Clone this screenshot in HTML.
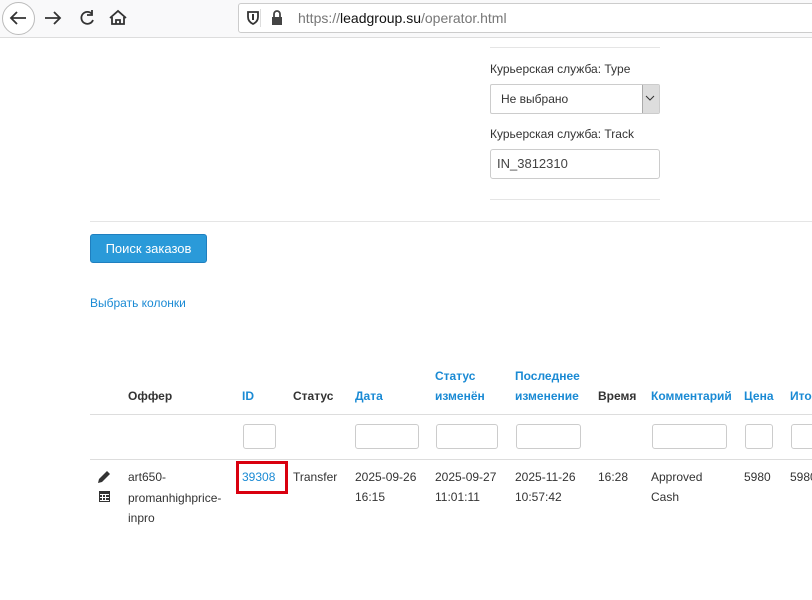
<!DOCTYPE html>
<html><head><meta charset="utf-8"><style>
*{box-sizing:border-box;margin:0;padding:0}
body{width:812px;height:600px;overflow:hidden;background:#fff;font-family:"Liberation Sans",sans-serif;font-size:12px;color:#333;position:relative}
.a{position:absolute;white-space:nowrap}
.b{color:#1a8ad4}
.h{font-weight:bold}
.in{position:absolute;border:1px solid #ccc;border-radius:3px;background:#fff;height:25px}
.hr{position:absolute;height:1px;background:#e5e5e5}
</style></head><body>
<div class="a" style="left:0;top:0;width:812px;height:38px;background:#f9f9fa;border-bottom:1px solid #ddd"></div>
<div class="a" style="left:2px;top:2px;width:33px;height:33px;border:1px solid #bbb;border-radius:50%;background:#fff"></div>
<svg class="a" style="left:0;top:0" width="140" height="38" fill="none" stroke="#333" stroke-width="1.8">
<path d="M26 18H11M17 12l-6 6 6 6"/><path d="M45 18h15M54 12l6 6-6 6"/>
<path d="M92 14a6 6 0 1 0 1 6"/><path d="M92 10v5h-5" /><path d="M110 18l8-7 8 7M112 17v7h12v-7M116 24v-4h4v4"/>
</svg>
<div class="a" style="left:238px;top:3px;width:580px;height:30px;background:#fff;border:1px solid #ccc;border-radius:3px"></div>
<svg class="a" style="left:245px;top:9px" width="50" height="18"><path d="M3 3h10v5c0 4-3 6-5 7-2-1-5-3-5-7z" fill="none" stroke="#333" stroke-width="1.8"/><rect x="7" y="5" width="2" height="6" fill="#333"/><rect x="15" y="0" width="1" height="18" fill="#ddd"/><rect x="27" y="8" width="10" height="8" fill="#444"/><path d="M29 8V5a3 3 0 0 1 6 0v3" fill="none" stroke="#444" stroke-width="1.8"/></svg>
<div class="a" style="left:298px;top:10px;font-size:14px;color:#777">https://<span style="color:#111">leadgroup.su</span>/operator.html</div>

<div class="hr" style="left:490px;top:47px;width:170px"></div>
<div class="a" style="left:490px;top:62px">Курьерская служба: Type</div>
<div class="in" style="left:490px;top:84px;width:170px;height:30px;border-radius:2px"></div>
<div class="a" style="left:501px;top:92px">Не выбрано</div>
<div class="a" style="left:642px;top:85px;width:17px;height:28px;background:#ddd;border-left:1px solid #aaa"></div>
<svg class="a" style="left:645px;top:94px" width="10" height="8"><path d="M1 2l4 4 4-4" fill="none" stroke="#333"/></svg>
<div class="a" style="left:490px;top:127px">Курьерская служба: Track</div>
<div class="in" style="left:490px;top:149px;width:170px;height:30px"></div>
<div class="a" style="left:497px;top:156px;font-size:13px;color:#444">IN_3812310</div>
<div class="hr" style="left:490px;top:199px;width:170px"></div>
<div class="hr" style="left:90px;top:221px;width:722px"></div>
<div class="a" style="left:90px;top:234px;width:117px;height:29px;background:#2a9ad9;border:1px solid #1f7fbf;border-radius:3px;color:#fff;font-size:13px;text-align:center;line-height:27px">Поиск заказов</div>
<div class="a b" style="left:90px;top:296px">Выбрать колонки</div>

<div class="a h" style="left:128px;top:389px">Оффер</div>
<div class="a h b" style="left:242px;top:389px">ID</div>
<div class="a h" style="left:293px;top:389px">Статус</div>
<div class="a h b" style="left:355px;top:389px">Дата</div>
<div class="a h b" style="left:435px;top:366px;line-height:20px">Статус<br>изменён</div>
<div class="a h b" style="left:515px;top:366px;line-height:20px">Последнее<br>изменение</div>
<div class="a h" style="left:598px;top:389px">Время</div>
<div class="a h b" style="left:651px;top:389px">Комментарий</div>
<div class="a h b" style="left:744px;top:389px">Цена</div>
<div class="a h b" style="left:790px;top:389px">Итого</div>
<div class="hr" style="left:90px;top:414px;width:722px;background:#ddd"></div>
<div class="in" style="left:243px;top:424px;width:33px"></div>
<div class="in" style="left:355px;top:424px;width:64px"></div>
<div class="in" style="left:436px;top:424px;width:62px"></div>
<div class="in" style="left:516px;top:424px;width:65px"></div>
<div class="in" style="left:652px;top:424px;width:75px"></div>
<div class="in" style="left:745px;top:424px;width:28px"></div>
<div class="in" style="left:791px;top:424px;width:40px"></div>
<div class="hr" style="left:90px;top:459px;width:722px;background:#ddd"></div>
<svg class="a" style="left:97px;top:469px" width="16" height="36" fill="#333"><path d="M1 14l1-4 8-8 3 3-8 8z"/><rect x="2" y="22" width="11" height="11"/><rect x="3" y="25" width="9" height="1" fill="#fff"/><rect x="3" y="28" width="9" height="1" fill="#fff"/><rect x="3" y="31" width="9" height="1" fill="#fff"/><rect x="5" y="25" width="1" height="7" fill="#fff"/><rect x="8" y="25" width="1" height="7" fill="#fff"/></svg>
<div class="a" style="left:128px;top:467px;line-height:20.5px">art650-<br>promanhighprice-<br>inpro</div>
<div class="a" style="left:236px;top:461px;width:52px;height:33px;border:3px solid #d9000f"></div>
<div class="a b" style="left:242px;top:470px">39308</div>
<div class="a" style="left:293px;top:470px">Transfer</div>
<div class="a" style="left:355px;top:467px;line-height:20px">2025-09-26<br>16:15</div>
<div class="a" style="left:435px;top:467px;line-height:20px">2025-09-27<br>11:01:11</div>
<div class="a" style="left:515px;top:467px;line-height:20px">2025-11-26<br>10:57:42</div>
<div class="a" style="left:598px;top:470px">16:28</div>
<div class="a" style="left:651px;top:467px;line-height:20px">Approved<br>Cash</div>
<div class="a" style="left:744px;top:470px">5980</div>
<div class="a" style="left:790px;top:470px">5980</div>
</body></html>
